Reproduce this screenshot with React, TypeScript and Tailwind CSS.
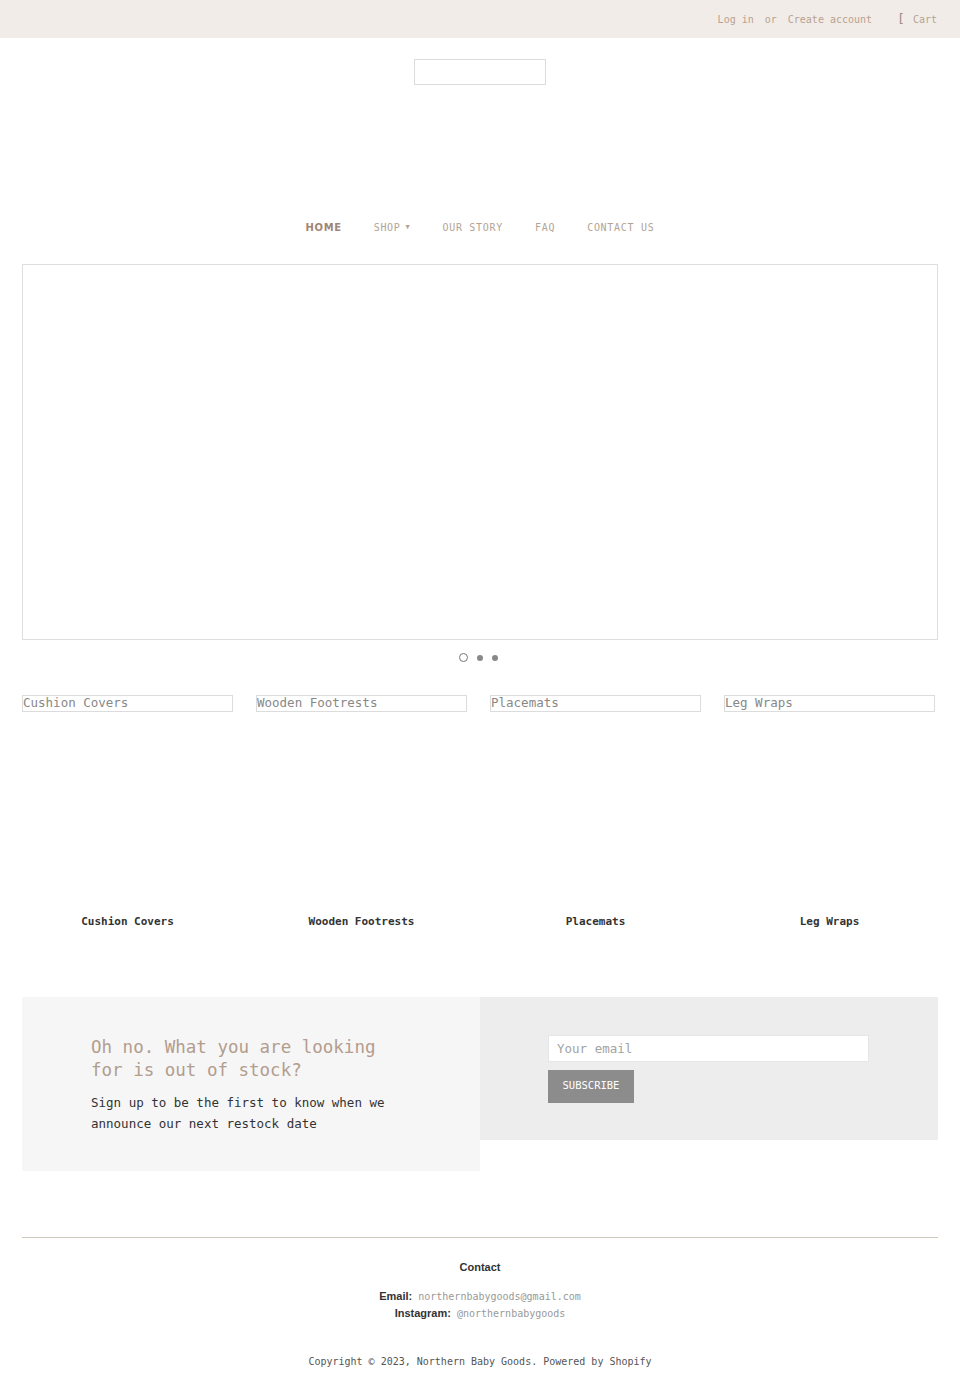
const mono = "font-['DejaVu_Sans_Mono',monospace]";

const collections = ["Cushion Covers", "Wooden Footrests", "Placemats", "Leg Wraps"];

const navLinks = ["SHOP", "OUR STORY", "FAQ", "CONTACT US"];

export default function App() {
  return (
    <div className={`min-h-[1394px] bg-white ${mono}`}>
      {/* top bar */}
      <div className="flex h-[38px] items-center justify-end bg-[#f1ece8] pr-[23px] text-[10px] text-[#b9a28f]">
        <span>Log in</span>
        <span className="ml-[11px]">or</span>
        <span className="ml-[11px]">Create account</span>
        <span className="ml-[25px] text-[13px] text-[#a08c7c]">[</span>
        <span className="ml-[8px]">Cart</span>
      </div>

      {/* logo */}
      <div className="flex justify-center pt-[21px]">
        <div className="h-[26px] w-[132px] border border-[#dcdcdc]" />
      </div>

      {/* nav */}
      <nav className="mt-[135px] flex items-center justify-center gap-[32px] text-[10px] tracking-[0.7px] text-[#b4a394]">
        <span className="font-['DejaVu_Sans',sans-serif] font-bold tracking-[0.6px] text-[#a08775]">HOME</span>
        {navLinks.map((l) => (
          <span key={l} className="flex items-center">
            {l}
            {l === "SHOP" && <span className="ml-[5px] text-[7px]">▼</span>}
          </span>
        ))}
      </nav>

      {/* slideshow */}
      <div className="mx-[22px] mt-[29px] h-[376px] border border-[#dedede]" />
      <div className="mt-[13px] flex justify-center gap-[9px] pr-[4px]">
        <span className="h-[9px] w-[9px] rounded-full border-[1.5px] border-[#777]" />
        <span className="mt-[1.5px] h-[6px] w-[6px] rounded-full bg-[#888]" />
        <span className="mt-[1.5px] h-[6px] w-[6px] rounded-full bg-[#888]" />
      </div>

      {/* collections */}
      <div className="mx-[22px] mt-[33px] flex gap-[23px]">
        {collections.map((c) => (
          <div key={c} className="flex w-[211px] flex-col">
            <div className="h-[17px] w-[211px] overflow-hidden border border-[#dcdcdc] text-[12.5px] leading-[14px] text-[#888]">
              {c}
            </div>
            <div className="mt-[202px] text-center text-[11px] font-bold text-[#333]">{c}</div>
          </div>
        ))}
      </div>

      {/* newsletter */}
      <div className="mx-[22px] mt-[66px] flex items-start">
        <div className="h-[174px] w-[458px] bg-[#f6f6f6] pl-[69px] pt-[39px]">
          <h2 className="w-[300px] text-[17.5px] leading-[23px] text-[#b29d8e]">
            Oh no. What you are looking for is out of stock?
          </h2>
          <p className="mt-[10px] w-[310px] text-[12.5px] font-medium leading-[21px] text-[#333]">
            Sign up to be the first to know when we announce our next restock date
          </p>
        </div>
        <div className="h-[143px] flex-1 bg-[#ededed] pl-[68px] pt-[38px]">
          <input
            placeholder="Your email"
            className={`${mono} block h-[27px] w-[321px] border border-[#e6e6e6] bg-white px-[8px] text-[12.5px] text-[#999] placeholder:text-[#a3a3a3] outline-none`}
          />
          <button className={`${mono} mt-[8px] h-[33px] w-[86px] bg-[#8c8c8c] text-[10.5px] text-white`}>
            SUBSCRIBE
          </button>
        </div>
      </div>

      {/* footer */}
      <div className="mx-[22px] mt-[66px] border-t border-[#cfc6bd]" />
      <div className="mt-[21px] text-center">
        <h3 className="font-['Liberation_Sans',Arial,sans-serif] text-[11px] font-bold text-[#333]">Contact</h3>
        <div className="mt-[13px] text-[10px] leading-[17px] text-[#999]">
          <p>
            <span className="font-['Liberation_Sans',Arial,sans-serif] text-[11px] font-bold text-[#333]">Email:</span>{" "}
            northernbabygoods@gmail.com
          </p>
          <p>
            <span className="font-['Liberation_Sans',Arial,sans-serif] text-[11px] font-bold text-[#333]">Instagram:</span>{" "}
            @northernbabygoods
          </p>
        </div>
        <p className="mt-[32px] text-[10px] text-[#555]">
          Copyright © 2023, Northern Baby Goods. Powered by Shopify
        </p>
      </div>
    </div>
  );
}
